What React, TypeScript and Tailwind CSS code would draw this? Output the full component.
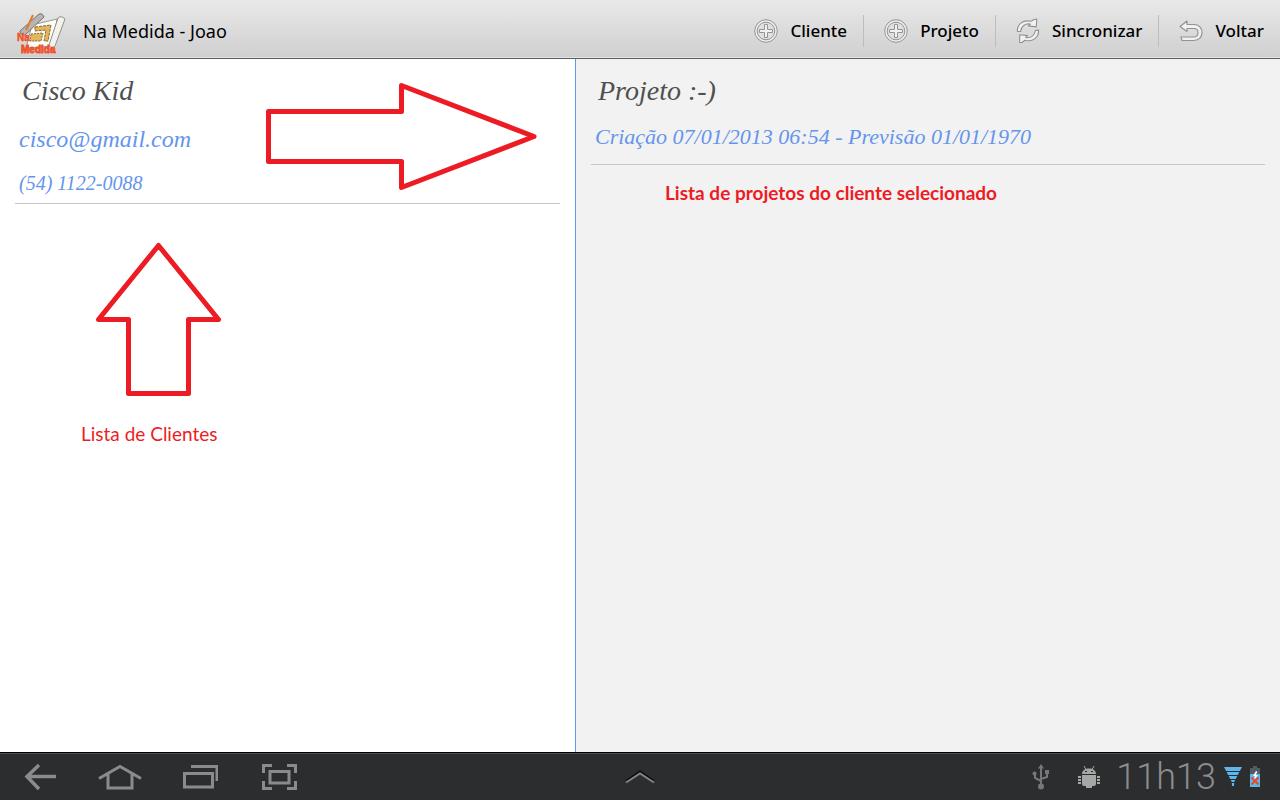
import type { ReactNode } from "react";

function Logo() {
  return (
    <svg width="52" height="46" viewBox="0 0 52 46" aria-hidden="true">
      <path d="M16 15 L41 9 L37 36 L10 38 Z" fill="#fdfdfb" stroke="#999" strokeWidth="1" />
      <path d="M42 8 Q45 5 49 9 L39 36 Q36 40 33 35 Z" fill="#f3f3ec" stroke="#8f8f8b" strokeWidth="1" />
      <path d="M19 17 L35 15 L32 31 L28 31 L30 20 L19 21 Z" fill="#e2b65c" stroke="#8a6a2a" strokeWidth="1" strokeDasharray="3 1" />
      <path d="M15 24 L27 23 L25 31 L14 31 Z" fill="#e2b65c" stroke="#8a6a2a" strokeWidth="1" strokeDasharray="2 1" />
      <path d="M4 21 L23 4 Q27 3 28 7 L9 25 Q4 26 4 21 Z" fill="#b7b5b1" stroke="#77736e" strokeWidth="1" />
      <path d="M17 5 L10 20" stroke="#e27b2c" strokeWidth="2" />
      <text x="1" y="31" fontFamily="Liberation Sans" fontWeight="bold" fontSize="10" fill="#f0522a" stroke="#f0522a" strokeWidth="0.5">Na</text>
      <text x="5" y="43" fontFamily="Liberation Sans" fontWeight="bold" fontSize="10" fill="#f0522a" stroke="#f0522a" strokeWidth="0.8">Medida</text>
    </svg>
  );
}

function PlusIcon() {
  return (
    <svg width="24" height="24" viewBox="0 0 24 24" fill="none" stroke="#949494" aria-hidden="true">
      <circle cx="12" cy="12" r="11.3" fill="#ededed" />
      <circle cx="12" cy="12" r="8.8" fill="#e0e0e0" />
      <path d="M10.5 5.5h3v5h5v3h-5v5h-3v-5h-5v-3h5z" fill="#f1f1f1" />
    </svg>
  );
}

function SyncIcon() {
  return (
    <svg width="24" height="26" viewBox="0 0 26 28" fill="#f1f1f1" stroke="#929292" strokeWidth="1.2" strokeLinejoin="round" aria-hidden="true">
      <path d="M1.5 14.5C1 7 7 1.5 16.5 3.500L19.5 1.500L22.5 1L22 9.500L13.5 8.500L15.5 6.500C10 5.500 5.500 9 5 14.500Z" />
      <path d="M24.500 13C25 20.500 18.500 26.500 9.500 24L6.500 26.500L4 26.500L4 18L12.500 19L10.500 21C15.500 22.500 20.500 19 21 13.500Z" />
    </svg>
  );
}

function BackIcon() {
  return (
    <svg width="24" height="22" viewBox="0 0 24 22" fill="#f1f1f1" stroke="#929292" strokeWidth="1.2" strokeLinejoin="round" aria-hidden="true">
      <path d="M1 6.500L8 1V4.500H15C20 4.500 23 8 23 12.500C23 17 20 20.500 15 20.500H3L2 17H15C17.500 17 19 15 19 12.500C19 10 17.500 8.500 15 8.500H8V11.500Z" />
    </svg>
  );
}

const actions = [
  { label: "Cliente", icon: <PlusIcon /> },
  { label: "Projeto", icon: <PlusIcon /> },
  { label: "Sincronizar", icon: <SyncIcon /> },
  { label: "Voltar", icon: <BackIcon /> },
];

function Header() {
  return (
    <header className="flex h-[59px] items-center justify-between border-b border-[#5c5c5c] bg-linear-to-b from-[#e9e9e9] to-[#cfcfcf] pl-4 font-['Noto_Sans',sans-serif] text-[17px] text-black shadow-[inset_0_-1px_0_#e4e4e4]">
      <div className="flex items-center gap-[15px] pt-2">
        <Logo />
        <h1 className="pb-1 text-lg">Na Medida - Joao</h1>
      </div>
      <nav className="flex items-center pt-1">
        {actions.map(({ label, icon }) => (
          <button
            key={label}
            type="button"
            className="flex h-8 items-center gap-3 border-l border-[#bdbdbd] pr-4 pl-5 font-medium first:border-l-0"
          >
            {icon}
            {label}
          </button>
        ))}
      </nav>
    </header>
  );
}

function NavButton({ label, children }: { label: string; children: ReactNode }) {
  return (
    <button type="button" aria-label={label} className="flex h-11 w-20 items-center justify-center">
      {children}
    </button>
  );
}

function SystemBar() {
  return (
    <footer className="grid h-12 grid-cols-[1fr_auto_1fr] items-center border-t border-black bg-[#2c2d2f] shadow-[inset_0_1px_0_#4c4d4e]">
      <div className="flex">
        <NavButton label="Voltar">
          <svg width="32" height="28" viewBox="0 0 32 28" fill="none" stroke="#8b8b8b" strokeWidth="3.5">
            <path d="M32 13.500H4M15 2L3 13.500L15 26" />
          </svg>
        </NavButton>
        <NavButton label="Início">
          <svg width="44" height="26" viewBox="0 0 44 26" fill="none" stroke="#8b8b8b" strokeWidth="3">
            <path d="M1 14.500L22 2.500L43 14.500M10 10V24H34V10" />
          </svg>
        </NavButton>
        <NavButton label="Aplicativos recentes">
          <svg width="36" height="26" viewBox="0 0 36 26" fill="none" stroke="#8b8b8b" strokeWidth="3">
            <path d="M2.500 9.500H30.500V23H2.500ZM9 2.500H35V17" />
          </svg>
        </NavButton>
        <NavButton label="Capturar tela">
          <svg width="36" height="28" viewBox="0 0 36 28" fill="none" stroke="#8b8b8b" strokeWidth="3">
            <path d="M8 8.500H27V20H8ZM1.500 10V2.500H10M25 2.500H33.500V10M33.500 18V25.500H25M10 25.500H1.500V18" />
          </svg>
        </NavButton>
      </div>
      <button type="button" aria-label="Expandir">
        <svg width="30" height="14" viewBox="0 0 30 14" fill="none" strokeWidth="2">
          <path d="M1 11L15 1.500L29 11" stroke="#0d0d0d" />
          <path d="M1 12.500L15 3.500L29 12.500" stroke="#858585" />
        </svg>
      </button>
      <div className="flex items-center justify-end pr-5">
        <svg width="18" height="26" viewBox="0 0 18 26" fill="none" stroke="#777" strokeWidth="2" aria-label="USB">
          <path d="M9 3V22M9 17L3 14V9M9 15L15 13V8" />
          <path d="M6 4.500L9 0L12 4.500Z" fill="#777" stroke="none" />
          <circle cx="9" cy="22.5" r="3" fill="#777" stroke="none" />
          <circle cx="2.500" cy="9.5" r="2" fill="#777" stroke="none" />
          <path d="M13 6H17V10H13Z" fill="#777" stroke="none" />
        </svg>
        <svg className="ml-7" width="22" height="22" viewBox="0 0 22 22" fill="#a4a7a5" aria-label="Depuração">
          <path d="M4 8C4 4.500 7 2.500 11 2.500S18 4.500 18 8ZM4 9H18V18Q18 20 16 20H14V22H8V20H6Q4 20 4 18Z" />
          <path d="M0 10H3V12H0ZM0 13H3V15H0ZM0 16H3V18H0ZM19 10H22V12H19ZM19 13H22V15H19ZM19 16H22V18H19Z" />
          <path d="M6 0L8 3.500M16 0L14 3.500" stroke="#a4a7a5" />
          <path d="M7 5H9V6H7ZM13 5H15V6H13Z" fill="#2c2d2f" />
        </svg>
        <time className="ml-4 font-['Roboto',sans-serif] text-4xl font-light text-[#8c8c8c]">11h13</time>
        <svg className="ml-2" width="18" height="20" viewBox="0 0 18 20" fill="#5cb8ec" aria-label="Sinal">
          <path d="M0 0H18L15.900 4H2.100ZM2.600 5H15.400L13.800 8H4.200ZM4.700 9H13.300L11.700 12H6.300ZM6.800 13H11.200L10.200 15H7.800ZM7.800 16H10.200L10 19H8Z" />
        </svg>
        <svg className="ml-2" width="10" height="21" viewBox="0 0 10 21" aria-label="Bateria">
          <path d="M3 0H7V2H10V21H0V2H3Z" fill="#4f5c61" />
          <path d="M0 8H10V21H0Z" fill="#5cb8ec" />
          <path d="M6 5L3 10H5L4 14L8 9H5.500L7.500 6Z" fill="#fff" />
          <path d="M1.500 11.500L8.500 18.500M8.500 11.500L1.500 18.500" stroke="#ef4427" strokeWidth="2" />
        </svg>
      </div>
    </footer>
  );
}

export default function App() {
  return (
    <div className="flex min-h-screen flex-col">
      <Header />
      <main className="grid grow grid-cols-[45fr_55fr] font-['Liberation_Serif',serif] text-[#6495ed] italic">
        <section className="relative border-r border-[#6495ed] bg-white px-[15px]">
          <div className="border-b border-[#c6c6c6] px-1 pt-3">
            <h2 className="px-[3px] text-[28px] leading-10 text-[#505050]">Cisco Kid</h2>
            <p className="pt-2 text-2xl leading-10">cisco@gmail.com</p>
            <p className="pt-1 text-xl leading-10">(54) 1122-0088</p>
          </div>
          <svg
            className="absolute top-6 left-[265px]"
            width="272"
            height="108"
            viewBox="0 0 272 108"
            fill="none"
            stroke="#ed1c24"
            strokeWidth="5"
            strokeLinejoin="round"
            aria-hidden="true"
          >
            <path d="M3.500 28.500H136.500V2.500L269 53.500L136.500 104.500V78.500H3.500Z" />
          </svg>
          <div className="pt-9 pl-[66px] text-[#ed1c24] not-italic">
            <svg
              width="142"
              height="160"
              viewBox="0 0 142 160"
              fill="none"
              stroke="#ed1c24"
              strokeWidth="5"
              strokeLinejoin="round"
              aria-hidden="true"
            >
              <path d="M77.500 5.500L137.500 79.500H107.500V153.500H47.500V79.500H17.500Z" />
            </svg>
            <p className="pt-5 font-['Lato',sans-serif] text-[19px] leading-7">Lista de Clientes</p>
          </div>
        </section>
        <section className="bg-[#f2f2f2] px-[15px]">
          <div className="border-b border-[#c6c6c6] px-1 pt-3 pb-[7px]">
            <h2 className="px-[3px] text-[28px] leading-10 text-[#505050]">Projeto :-)</h2>
            <p className="pt-[6px] text-[22px] leading-10">Criação 07/01/2013 06:54 - Previsão 01/01/1970</p>
          </div>
          <p className="pt-[14px] pl-[74px] font-['Lato',sans-serif] text-[19px] leading-7 font-bold text-[#ed1c24] not-italic">
            Lista de projetos do cliente selecionado
          </p>
        </section>
      </main>
      <SystemBar />
    </div>
  );
}
